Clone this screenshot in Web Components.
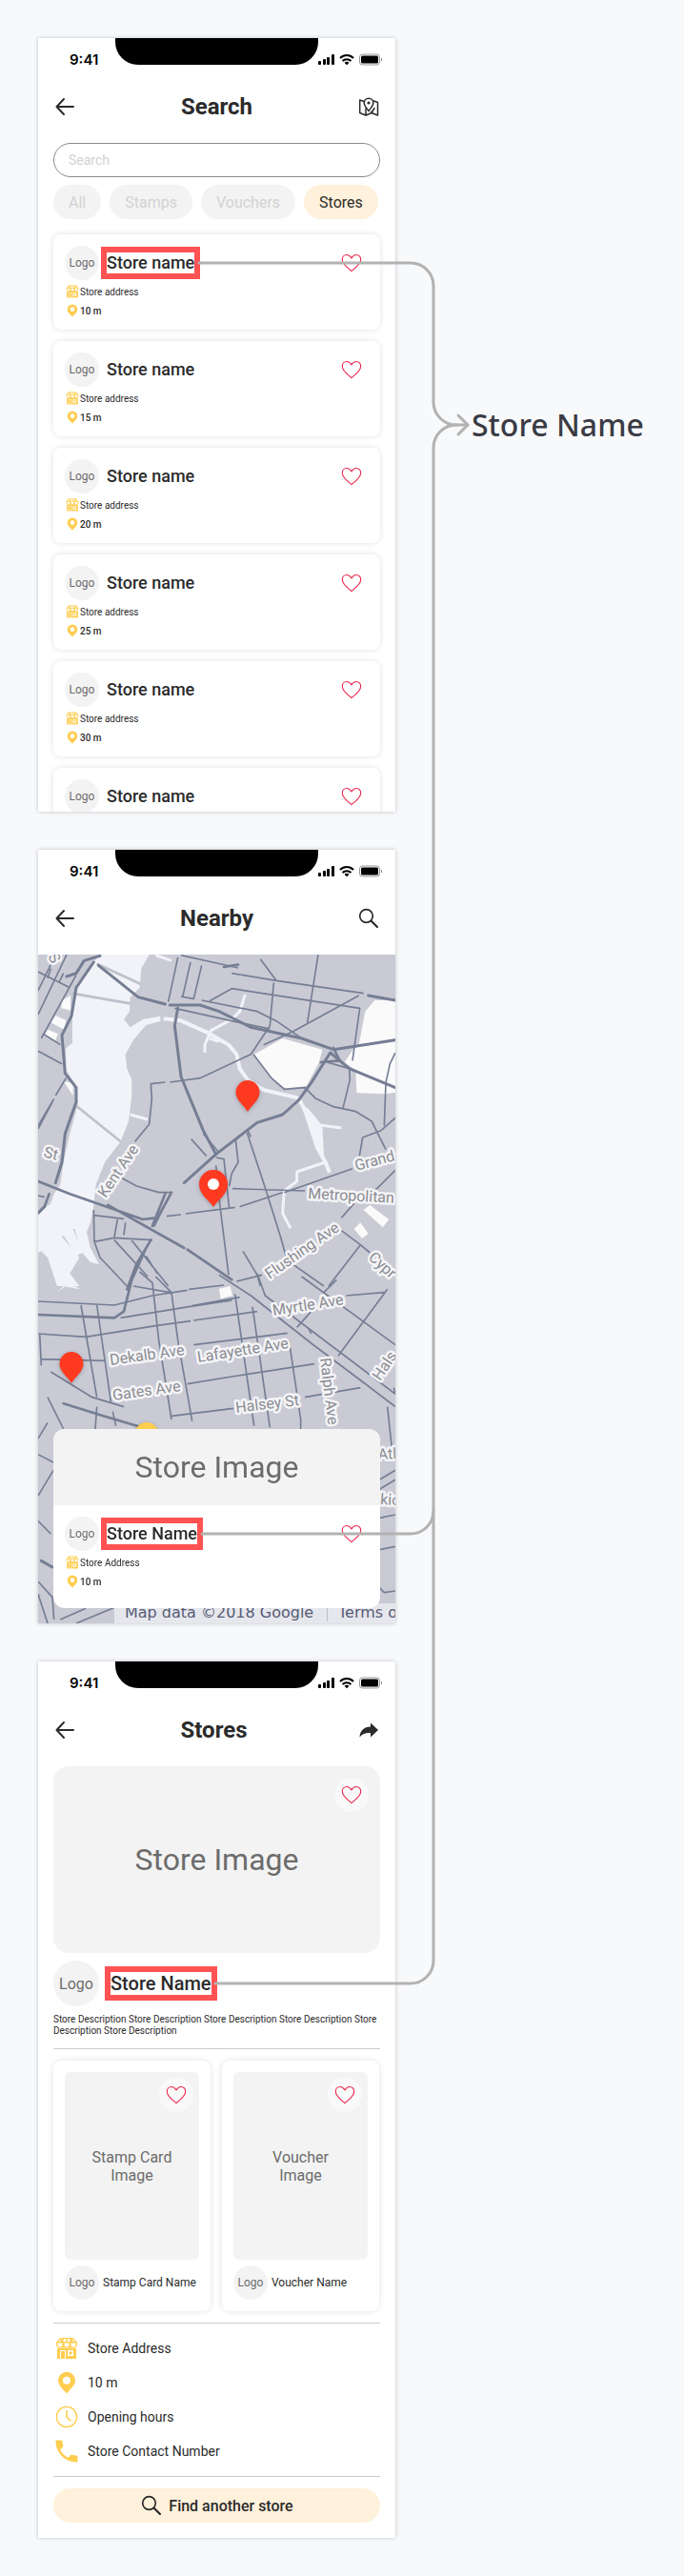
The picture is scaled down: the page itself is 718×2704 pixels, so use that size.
<!DOCTYPE html>
<html lang="en">
<head>
<meta charset="utf-8">
<meta name="viewport" content="width=device-width, initial-scale=1">
<title>Store Name usage</title>
<style>
  body { margin: 0; background: #f8f9fb; font-family: Roboto, "Liberation Sans", sans-serif; color: #2b2b2b; }
</style>
</head>
<body>
<spec-board>
  <phone-frame heading="Search" action="map" action-label="Show map" screen>
    <search-panel></search-panel>
    <card-list>
      <store-card name="Store name" address="Store address" distance="10 m" marked></store-card>
      <store-card name="Store name" address="Store address" distance="15 m"></store-card>
      <store-card name="Store name" address="Store address" distance="20 m"></store-card>
      <store-card name="Store name" address="Store address" distance="25 m"></store-card>
      <store-card name="Store name" address="Store address" distance="30 m"></store-card>
      <store-card name="Store name"></store-card>
    </card-list>
  </phone-frame>
  <phone-frame heading="Nearby" action="search" action-label="Search" screen>
    <map-view>
      <store-card name="Store Name" address="Store Address" distance="10 m" image="Store Image" marked></store-card>
    </map-view>
  </phone-frame>
  <phone-frame heading="Stores&nbsp;" action="share" action-label="Share">
    <store-details></store-details>
  </phone-frame>
  <span slot="label">Store Name</span>
</spec-board>

<script>
const ICONS = {
  back: '<path d="M21 12H3.500M11 4 3.500 12l7.500 8" fill="none" stroke="currentColor" stroke-width="2" stroke-linecap="round" stroke-linejoin="round"/>',
  search: '<circle cx="9.500" cy="9.500" r="6.800" fill="none" stroke="currentColor" stroke-width="1.700"/><path d="m14.500 14.500 6.500 6.500" stroke="currentColor" stroke-width="2.200" stroke-linecap="round"/>',
  map: '<g fill="none" stroke="currentColor" stroke-width="1.500" stroke-linejoin="round" stroke-linecap="round"><path d="M7 6.500 2.700 5v13.500L9 21l6-2.500 6.500 2.500V7.500L17.500 6"/><path d="M9 14v7M15 18.500 18 13.500M15 18.500V17"/><path d="M12 16.500c-2-3-4.800-5.500-4.800-8.500a4.800 4.800 0 0 1 9.600 0c0 3-2.800 5.500-4.800 8.500z"/></g><circle cx="12" cy="8" r="1.600" fill="currentColor"/>',
  share: '<path d="M14 4.500 22 12l-8 7.500v-4.300c-4.500-.4-8 .5-11.500 4.300C3 12.500 7 8.800 14 8.500z" fill="currentColor"/>',
  heart: '<path d="M12 7C10.500 4.500 8.800 3.500 7 3.500c-2.800 0-4.700 2.100-4.700 5C2.300 13.500 8 17 12 20.700c4-3.700 9.700-7.200 9.700-12.200 0-2.900-1.900-5-4.700-5-1.800 0-3.500 1-5 3.500z" fill="none" stroke="currentColor" stroke-width="1.100" stroke-linejoin="round"/>',
  pin: '<path fill-rule="evenodd" d="M12 .8a9 9 0 0 0-9 9c0 5 4.500 8.200 9 13.700 4.500-5.500 9-8.700 9-13.700a9 9 0 0 0-9-9zm0 4.900a4 4 0 1 1 0 8 4 4 0 0 1 0-8z" fill="currentColor"/>',
  store: '<path d="M5 1h14l4 5v2a3.700 3.700 0 0 1-3 3.500H4A3.700 3.700 0 0 1 1 8V6z" fill="currentColor"/><path d="M6.500 2.200 4.800 5H3.300l2.200-2.800zM9 2.200h2.300V5H8zM12.700 2.200H15L16 5h-3.300zM17.500 2.200h1L20.700 5h-1.500z" fill="#fff"/><path d="M2.500 6.500h5V8a2.500 2.500 0 0 1-5 0zM9.500 6.500h5V8a2.500 2.500 0 0 1-5 0zM16.500 6.500h5V8a2.500 2.500 0 0 1-5 0z" fill="#fff"/><path d="M2 12h20v11H2z" fill="currentColor"/><path d="M5 23v-9h6v9h-1v-8H6v8zM13 14h6v6h-6zm1.500 1.500v3h3v-3z" fill="#fff" fill-rule="evenodd"/>',
  clock: '<circle cx="12" cy="12" r="10.600" fill="none" stroke="currentColor" stroke-width="1.400"/><path d="M12 5v7l4.500 4.500" fill="none" stroke="currentColor" stroke-width="1.600"/>',
  phone: '<path transform="translate(-3.300 -3.300) scale(1.275)" d="M6.620 10.790c1.440 2.830 3.760 5.140 6.590 6.590l2.200-2.200c.27-.27.67-.36 1.020-.24 1.120.37 2.330.57 3.570.57.55 0 1 .45 1 1V20c0 .55-.45 1-1 1-9.390 0-17-7.610-17-17 0-.55.45-1 1-1h3.500c.55 0 1 .45 1 1 0 1.250.2 2.450.57 3.570.11.35.03.74-.25 1.020l-2.200 2.200z" fill="currentColor"/>'
};

function define(name, render) {
  customElements.define(name, class extends HTMLElement {
    connectedCallback() {
      if (this.shadowRoot) return;
      this.attachShadow({ mode: 'open' }).innerHTML = render(this);
    }
  });
}

/* Single glyph from the icon set; sized with --size */
define('app-icon', el => `
  <style>
    :host { display: inline-flex; flex: none; width: var(--size, 24px); height: var(--size, 24px); }
    svg { width: 100%; height: 100%; }
  </style>
  <svg viewBox="0 0 24 24" aria-hidden="true">${ICONS[el.getAttribute('name')]}</svg>`);

define('logo-badge', () => `
  <style>
    :host { display: flex; flex: none; align-items: center; justify-content: center; border-radius: 50%;
      width: var(--badge, 36px); height: var(--badge, 36px); background: #f3f3f3; color: #6c6c6c;
      font-size: var(--badge-text, 12px); }
  </style>Logo`);

define('fav-button', () => `
  <style>
    :host { display: block; flex: none; }
    button { display: flex; align-items: center; justify-content: center; width: 36px; height: 36px; padding: 0;
      border: 0; border-radius: 50%; background: var(--fav-bg, none); color: #e9264f; cursor: pointer; }
  </style>
  <button type="button" aria-label="Add to favourites" aria-pressed="false"><app-icon name="heart"></app-icon></button>`);

/* Store name, optionally framed in red by the annotation */
define('store-name', () => `
  <style>
    :host { display: block; font-weight: 500; font-size: 18px; line-height: 22px; white-space: nowrap; }
    :host([large]) { font-size: 20px; line-height: 24px; }
    :host([marked]) { outline: 6px solid #ff5253; }
  </style><slot></slot>`);

define('status-bar', () => `
  <style>
    :host { display: grid; grid-template-columns: 1fr 213px 1fr; height: 44px; color: #000; }
    time { font: 600 15px/18px Inter, sans-serif; padding: 14px 0 0 33px; }
    .notch { height: 28px; background: #000; border-radius: 0 0 24px 24px; }
    svg { margin: 15px 0 0; width: 68px; height: 16px; }
  </style>
  <time>9:41</time><div class="notch"></div>
  <svg viewBox="0 0 68 16" aria-hidden="true">
    <rect x="0" y="9" width="3" height="4" rx="1"/><rect x="5" y="7" width="3" height="6" rx="1"/>
    <rect x="9" y="5" width="3" height="8" rx="1"/><rect x="14" y="2" width="3" height="11" rx="1"/>
    <g fill="none" stroke="#000" stroke-width="2"><path d="M23 6c4-4 10-4 14 0"/><path d="M25.500 9c2.500-2.500 6.500-2.500 9 0"/></g>
    <path d="M27.500 10.800c1.500-1.300 3.500-1.300 5 0L30 13.300z"/>
    <rect x="43.500" y="2" width="21" height="11" rx="3" fill="none" stroke="#000" stroke-opacity=".4"/>
    <rect x="45" y="3.500" width="18" height="8" rx="1.500"/>
    <path d="M66 5.500v4c1.500-.7 1.500-3.300 0-4z" opacity=".45"/>
  </svg>`);

define('phone-frame', el => `
  <style>
    :host { display: flex; flex-direction: column; width: 375px; background: #fff; overflow: hidden;
      box-shadow: 0 0 4px rgba(40, 45, 60, .28); }
    :host([screen]) { height: 812px; }
    header { display: grid; grid-template-columns: 24px 1fr 24px; align-items: center; padding: 12px 16px 22px; height: 32px; }
    h1 { margin: 0; text-align: center; font-size: 24px; line-height: 32px; font-weight: 700; }
    button { display: flex; padding: 0; border: 0; background: none; color: inherit; cursor: pointer; }
    main { display: flex; flex: 1; flex-direction: column; min-height: 0; }
  </style>
  <status-bar></status-bar>
  <header>
    <button type="button" aria-label="Back"><app-icon name="back"></app-icon></button>
    <h1>${el.getAttribute('heading')}</h1>
    <button type="button" aria-label="${el.getAttribute('action-label')}"><app-icon name="${el.getAttribute('action')}"></app-icon></button>
  </header>
  <main><slot></slot></main>`);

define('search-panel', () => `
  <style>
    :host { display: block; padding: 0 16px; }
    input { box-sizing: border-box; width: 100%; height: 36px; display: block; padding: 0 15px; border: 1px solid #8a8a8a;
      border-radius: 18px; background: #fff; font: 14px Roboto, sans-serif; color: #2b2b2b; }
    input::placeholder { color: #d2d2d2; opacity: 1; }
    nav { display: flex; gap: 9px; margin: 8px 0 16px; }
    button { height: 36px; padding: 0 16px; border: 0; border-radius: 18px; background: #f3f3f3; color: #d2d2d2;
      font: 16px Roboto, sans-serif; cursor: pointer; }
    button[aria-pressed=true] { background: #fff1db; color: #2b2b2b; }
  </style>
  <input type="search" placeholder="Search" aria-label="Search">
  <nav aria-label="Filter">
    <button type="button" aria-pressed="false">All</button>
    <button type="button" aria-pressed="false">Stamps</button>
    <button type="button" aria-pressed="false">Vouchers</button>
    <button type="button" aria-pressed="true">Stores</button>
  </nav>`);

define('card-list', () => `
  <style>:host { display: flex; flex-direction: column; gap: 12px; padding: 0 16px; }</style><slot></slot>`);

define('store-card', el => {
  const image = el.getAttribute('image');
  const address = el.getAttribute('address');
  const distance = el.getAttribute('distance');
  return `
  <style>
    :host { display: block; border-radius: 8px; background: #fff; box-shadow: 0 0 6px rgba(0, 0, 0, .12); }
    :host([image]) { border-radius: 12px; box-shadow: none; overflow: hidden; }
    .image { display: flex; align-items: center; justify-content: center; height: 80px; background: #f3f3f3;
      color: #6c6c6c; font-size: 32px; }
    .body { padding: 12px 12px 10px; }
    :host([image]) .body { padding-bottom: 18px; }
    .head { display: flex; align-items: center; gap: 8px; margin-bottom: 2px; }
    .head fav-button { margin-left: auto; }
    .line { display: grid; grid-template-columns: 16px 1fr; align-items: center; height: 20px; font-size: 10px; }
    app-icon { --size: 14px; color: #ffcd4f; justify-self: center; }
    strong { font-weight: 500; }
  </style>
  ${image ? `<div class="image">${image}</div>` : ''}
  <div class="body">
    <div class="head">
      <logo-badge></logo-badge>
      <store-name ${el.hasAttribute('marked') ? 'marked' : ''}>${el.getAttribute('name')}</store-name>
      <fav-button></fav-button>
    </div>
    ${address ? `<div class="line"><app-icon name="store"></app-icon><span>${address}</span></div>` : ''}
    ${distance ? `<div class="line"><app-icon name="pin"></app-icon><strong>${distance}</strong></div>` : ''}
  </div>`;
});

/* Street map. Terrain and roads share a finer grid, three units to the pixel. */
define('map-view', () => `
  <style>
    :host { display: flex; flex: 1; flex-direction: column; justify-content: flex-end; position: relative; padding: 0 16px 16px;
      background: #c9cad4; overflow: hidden; }
    svg { position: absolute; inset: 0; width: 100%; height: 100%; }
    ::slotted(*) { position: relative; }
    .names { font: 16px Roboto, sans-serif; fill: #8b8c92; stroke: #f4f4f7; stroke-width: 5px; stroke-linejoin: round; paint-order: stroke; }
    .credit { font: 16px "DejaVu Sans", sans-serif; fill: #565b75; }
  </style>
  <svg viewBox="0 0 375 702" preserveAspectRatio="xMidYMin slice" role="img" aria-label="Street map">
    <g transform="scale(.333333) translate(-30 -36)" fill="none" stroke-linejoin="round">
      <path fill="#f1f3f8" d="M225 36H380L355 80 350 140 320 170 318 215 300 240 320 265 360 240 415 230V246L370 258 330 305 305 350 310 395 325 430 325 480 315 560 290 625 240 690 212 760 203 840 195 880 183 910 195 960 222 1012 195 1005 165 970 145 900 140 900 170 975 150 985 110 920 105 925 160 990 130 1040 160 1080H90L60 990 40 970 30 975V850L70 820 80 790 100 760 110 690 130 600 155 510 150 450 118 400V330L138 315V200L150 130 205 60z"/>
      <path fill="#f1f3f8" d="M110 1080 160 1090 120 1065 165 1090 125 1075 90 1098z"/>
      <g fill="#fafafb">
        <path d="M708 352 800 300 925 335 915 375 875 450 810 458 765 425zM1090 180H1155V300L1040 320 1060 215zM1025 330 1155 302V470L1125 475 1033 472 1030 400 995 375zM105 180 132 165V212L103 205zM70 250 85 228 118 243 112 272zM50 290 60 272 92 285 85 306zM110 435 140 440V480zM1055 840 1075 825 1135 870 1115 895zM1025 900 1045 880 1070 915 1050 930zM600 1088 635 1080 642 1110 605 1120z"/>
      </g>
      <g stroke="#f1f3f8" stroke-width="12">
        <path d="M425 238 480 244 560 280 630 320 655 350 665 395 690 430 740 462 850 488 870 525 895 585 915 655 935 690 948 722"/>
        <path d="M682 162 665 215 640 240 575 275 555 320V345M570 300 600 310M895 570 985 582M935 690 845 720V750L805 780 800 850 825 898M320 540 375 555M400 38 450 55" stroke-width="9"/>
      </g>
      <path fill="#f1f3f8" d="M860 515 880 520 925 575 930 670 905 650z"/>
      <g stroke="#bfc0ca" stroke-width="8"><path d="M215 65 355 130M135 158 320 190M150 512 290 625"/></g>
      <g stroke="#767e94" stroke-width="5">
        <path d="M85 36 30 150M120 36 30 225M150 100 40 300M30 90 130 140M70 80 60 110M110 95 95 125M45 285 100 320M30 340 105 380M118 425 85 480M75 500 30 585M470 45 440 185M510 60 485 170M545 70 520 175 480 168M480 38 660 78M640 95 780 118 1055 158M730 50 780 118M912 36 878 250M772 125 760 260 700 350M570 182 640 143 1043 205 1020 370M1040 165 830 280 740 320M545 180 720 215 780 245 860 300M460 205 640 245 760 270"/>
        <path d="M708 350 765 425 805 460 870 455 905 490 960 515 1030 530 1080 560 1105 610 1125 650M700 350 540 425 445 438M430 438 385 443 388 490 380 570 335 625M940 375 1010 395 1012 430 990 520M1155 345 1138 380 1125 440 1120 575M1155 550 1110 590 1052 612 1042 670M688 597 745 770 795 930 810 985M512 617 560 670M652 620 660 690 640 725 632 765M642 773 870 780M590 675 615 680 632 835M590 700 603 830 630 1045"/>
        <path d="M805 785 1020 710M665 830 800 785M495 852 650 832M285 735 340 765 410 785 450 785M205 857 300 868M205 840 207 940 225 990 310 1080M207 940 270 928 390 935M280 870 270 925M305 880 300 920M270 935 375 1050M320 930 440 1080M370 985 405 1040M435 860 480 855M1155 715 1085 785M1025 820 985 865M985 905 1045 950 945 1080M1045 950 1075 975M830 1010 930 1080M655 1065 735 1045M675 970 720 1045 730 1080M30 575 80 490M550 600 600 660M30 795 50 800M690 590 700 610"/>
        <path d="M30 1128 270 1140 390 1110 500 1093M30 1230 180 1240 400 1205 510 1190M290 1180 505 1145 640 1125M515 1142 665 1115M520 1188 720 1160M505 1090 615 1077M330 1080 445 1100M350 1035 390 1070 410 1250 450 1500M400 1050 450 1100 470 1250 515 1505M165 1140 215 1430M215 1140 260 1450M35 1230 40 1330M40 1310 240 1315M520 1265 815 1228M500 1388 640 1365 900 1325M445 1490 645 1465M650 1105 710 1520M705 1145 760 1525M820 1250 857 1500V1530M870 1430 1045 1400M60 1430 110 1530M70 1350 200 1430 300 1460M215 1460 210 1530M265 1475 275 1520M60 1510 30 1560"/>
        <path d="M600 1045 700 1110 890 1260 1050 1380 1155 1460M860 1050 1155 1265M970 1060 930 1100M1120 1100 1000 1110M1130 1090 975 1300M890 1160 845 1210M720 1040 745 1110 1155 1420M880 1210 890 1230M1130 1460 1145 1600M1150 1400 1155 1420M30 1610 78 1635M78 1660 30 1740M30 1820 70 1860M30 2010 75 2060 80 2130M30 2050 60 2142M100 2130 180 2095M150 2142 300 2080M1105 1690 1155 1660M1105 1720 1155 1690M1105 1810 1155 1800M1105 1910 1155 1900M1105 2030 1120 2045 1155 2040"/>
      </g>
      <g stroke="#767e94" stroke-width="11" stroke-linecap="round">
        <path d="M225 40 175 55 150 95 120 105M205 60 150 140 135 230 105 290 115 410 150 455V500L115 600 105 690 85 755M50 830 30 850M220 70 345 170 430 192M445 195 540 195 600 215 700 265 860 300 960 335 1155 305M950 345 1010 395 1155 455M950 345 890 440 850 495 800 540 720 565 590 665 490 755M1070 165 1155 180M470 205 460 260 480 420 550 590 590 665" stroke-width="9"/>
        <path d="M450 785 415 850 395 890M430 790 390 890M385 935 340 1010 310 1090M370 960 325 1060 300 1160 270 1180 30 1170M110 1450 240 1490 375 1530M30 750 130 790 360 870 400 865M65 790 50 830M250 825 490 960M500 965 640 1060M615 75 660 68M960 330 980 370 920 375" stroke-width="8"/>
        <path d="M40 1945 75 1965" stroke-width="9"/>
      </g>
    </g>
    <g class="names">
      <text transform="translate(71 256) rotate(-56)">Kent Ave</text>
      <text transform="translate(334 227) rotate(-15)">Grand</text>
      <text transform="translate(283 256) rotate(3)">Metropolitan</text>
      <text transform="translate(243 341) rotate(-35)">Flushing Ave</text>
      <text transform="translate(346 319) rotate(42)">Cypr</text>
      <text transform="translate(247 379) rotate(-9)">Myrtle Ave</text>
      <text transform="translate(76 431) rotate(-8)">Dekalb Ave</text>
      <text transform="translate(168 428) rotate(-9)">Lafayette Ave</text>
      <text transform="translate(79 468) rotate(-8)">Gates Ave</text>
      <text transform="translate(208 481) rotate(-7)">Halsey St</text>
      <text transform="translate(296 424) rotate(83)">Ralph Ave</text>
      <text transform="translate(359 448) rotate(-56)">Hals</text>
      <text transform="translate(357 530) rotate(-3)">Atl</text>
      <text transform="translate(359 577) rotate(3)">kio</text>
      <text transform="translate(5 212) rotate(15)">St</text>
      <text transform="translate(10 2) rotate(60)">S</text>
    </g>
    <path fill="#e9eaf0" fill-opacity=".9" d="M80 681h295v21H80z"/>
    <text class="credit" x="91" y="696">Map data ©2018 Google</text>
    <path stroke="#b9bcc8" d="M303.500 686v14"/>
    <text class="credit" x="315" y="696">Terms o</text>
    <defs>
      <path id="drop" d="M0 0C-4-7-12.500-12-12.500-20.500a12.500 12.500 0 0 1 25 0C12.500-12 4-7 0 0z"/>
    </defs>
    <g fill="#ff3a20" style="filter: drop-shadow(0 1px 2px rgba(0,0,0,.25))">
      <use href="#drop" x="220" y="165"/>
      <use href="#drop" x="35" y="450"/>
      <path d="M184 265c-5-8-15-13-15-24a15 15 0 0 1 30 0c0 11-10 16-15 24z"/>
      <circle cx="184" cy="241" r="6" fill="#fff"/>
      <use href="#drop" x="114" y="524" fill="#ffcd4f"/>
    </g>
  </svg>
  <slot></slot>`);

define('reward-card', el => `
  <style>
    :host { display: flex; flex-direction: column; gap: 6px; padding: 12px; border-radius: 8px; background: #fff;
      box-shadow: 0 0 6px rgba(0, 0, 0, .12); }
    .image { position: relative; display: flex; align-items: center; justify-content: center; height: 197px;
      border-radius: 6px; background: #f3f3f3; color: #6c6c6c; font-size: 16px; line-height: 19px; text-align: center; }
    .image span { width: 90px; }
    fav-button { position: absolute; top: 6px; right: 6px; --fav-bg: #f9f9f9; }
    .foot { display: flex; align-items: center; gap: 4px; font-size: 12px; white-space: nowrap; }
  </style>
  <div class="image"><span>${el.getAttribute('image')}</span><fav-button></fav-button></div>
  <div class="foot"><logo-badge></logo-badge><span><slot></slot></span></div>`);

define('contact-row', el => `
  <style>
    :host { display: grid; grid-template-columns: 28px 1fr; gap: 8px; align-items: center; height: 36px; font-size: 14px; }
    app-icon { justify-self: center; color: #ffcd4f; }
  </style>
  <app-icon name="${el.getAttribute('icon')}"></app-icon><span><slot></slot></span>`);

define('store-details', () => `
  <style>
    :host { display: block; padding: 0 16px 16px; }
    .image { position: relative; display: flex; align-items: center; justify-content: center; height: 196px;
      border-radius: 16px; background: #f3f3f3; color: #6c6c6c; font-size: 32px; }
    .image fav-button { position: absolute; top: 12px; right: 12px; --fav-bg: #f9f9f9; }
    .title { display: flex; align-items: center; gap: 12px; margin: 8px 0; }
    .title logo-badge { --badge: 48px; --badge-text: 16px; }
    p { margin: 0 0 12px; font-size: 10px; line-height: 12px; }
    hr { margin: 0; border: 0; height: 1px; background: #ccc; }
    .rewards { display: grid; grid-template-columns: 1fr 1fr; gap: 12px; margin: 12px 0; padding-right: 1px; }
    .contacts { margin: 8px 0; }
    .cta { display: flex; align-items: center; justify-content: center; gap: 6px; width: 100%; height: 36px; margin-top: 12px; padding: 0;
      border: 0; border-radius: 18px; background: #fff1db; color: #2b2b2b; font: 500 16px Roboto, sans-serif; cursor: pointer; }
  </style>
  <div class="image">Store Image<fav-button></fav-button></div>
  <div class="title"><logo-badge></logo-badge><store-name large marked>Store Name</store-name></div>
  <p>Store Description Store Description Store Description Store Description Store Description Store Description</p>
  <hr>
  <div class="rewards">
    <reward-card image="Stamp Card Image">Stamp Card Name</reward-card>
    <reward-card image="Voucher<br>Image">Voucher Name</reward-card>
  </div>
  <hr>
  <div class="contacts">
    <contact-row icon="store">Store Address</contact-row>
    <contact-row icon="pin">10 m</contact-row>
    <contact-row icon="clock">Opening hours</contact-row>
    <contact-row icon="phone">Store Contact Number</contact-row>
  </div>
  <hr>
  <button class="cta" type="button"><app-icon name="search"></app-icon>Find another store</button>`);

/* Board: phones on the left, the shared label on the right, connectors drawn over both */
define('spec-board', () => `
  <style>
    :host { display: flex; align-items: flex-start; gap: 80px; position: relative; padding: 40px; }
    .phones { display: flex; flex: none; flex-direction: column; gap: 40px; }
    aside { padding-top: 384px; font: 500 32px/44px "Noto Sans", sans-serif; color: #3a3b44; white-space: nowrap; }
    svg { position: absolute; top: 0; left: 0; width: 500px; height: 2100px; pointer-events: none; }
  </style>
  <div class="phones"><slot></slot></div>
  <aside><slot name="label"></slot></aside>
  <svg viewBox="0 0 500 2100" fill="none" stroke="#b2b2b2" stroke-width="3" stroke-linecap="round" stroke-linejoin="round" aria-hidden="true">
    <path d="M209 276H431a24 24 0 0 1 24 24V422a24 24 0 0 0 24 24H491"/>
    <path d="M212 1610H431a24 24 0 0 0 24-24V470a24 24 0 0 1 24-24"/>
    <path d="M226 2082H431a24 24 0 0 0 24-24V1586"/>
    <path d="M481 436l10 10-10 10"/>
  </svg>`);
</script>
</body>
</html>
